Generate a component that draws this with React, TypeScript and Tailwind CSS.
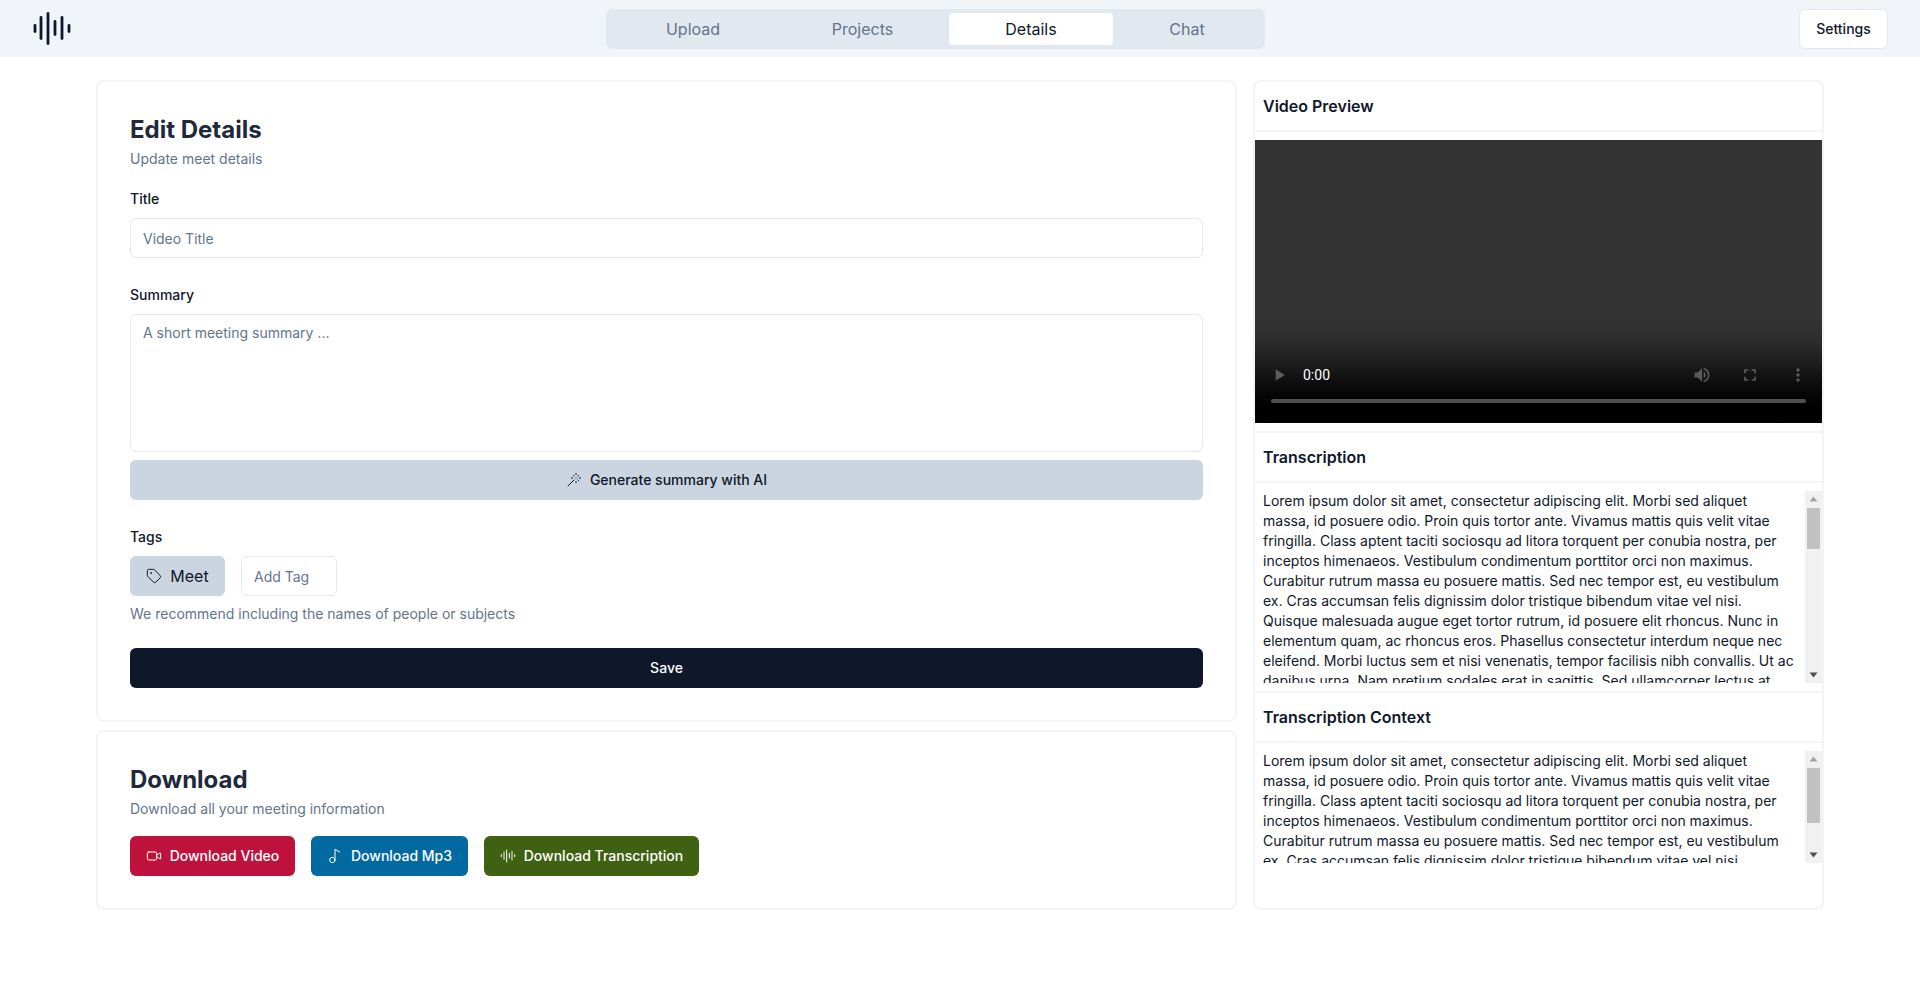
import { Tag, Video, Music2, AudioLines, Wand } from 'lucide-react';
import type { ReactNode } from 'react';

const lorem =
  'Lorem ipsum dolor sit amet, consectetur adipiscing elit. Morbi sed aliquet massa, id posuere odio. Proin quis tortor ante. Vivamus mattis quis velit vitae fringilla. Class aptent taciti sociosqu ad litora torquent per conubia nostra, per inceptos himenaeos. Vestibulum condimentum porttitor orci non maximus. Curabitur rutrum massa eu posuere mattis. Sed nec tempor est, eu vestibulum ex. Cras accumsan felis dignissim dolor tristique bibendum vitae vel nisi. Quisque malesuada augue eget tortor rutrum, id posuere elit rhoncus. Nunc in elementum quam, ac rhoncus eros. Phasellus consectetur interdum neque nec eleifend. Morbi luctus sem et nisi venenatis, tempor facilisis nibh convallis. Ut ac dapibus urna. Nam pretium sodales erat in sagittis. Sed ullamcorper lectus at lorem fermentum, nec pretium nunc pulvinar.';

const tabs = ['Upload', 'Projects', 'Details', 'Chat'];

function Logo() {
  const bars = [
    [3, 12, 21],
    [9, 4, 28],
    [16, 0, 33],
    [23, 8, 24],
    [30, 4, 28],
    [37, 12, 21],
  ];
  return (
    <svg width="40" height="33" viewBox="0 0 40 33" stroke="#0f172a" strokeWidth="2.8" strokeLinecap="round">
      {bars.map(([x, y1, y2]) => (
        <line key={x} x1={x} y1={y1 + 1.4} x2={x} y2={y2 - 1.4} />
      ))}
    </svg>
  );
}

function Arrow({ points, fill }: Readonly<{ points: string; fill: string }>) {
  return (
    <svg width="17" height="17" viewBox="0 0 17 17" className="shrink-0">
      <polygon points={points} fill={fill} />
    </svg>
  );
}

function Scrollbar({ thumb }: Readonly<{ thumb: string }>) {
  return (
    <div className="w-[17px] shrink-0 bg-[#f1f1f1] flex flex-col justify-between">
      <div className="flex flex-col items-center">
        <Arrow points="8.5,5.5 12.5,10.5 4.5,10.5" fill="#a3a3a3" />
        <div className={`${thumb} w-[13px] bg-[#c1c1c1]`} />
      </div>
      <Arrow points="8.5,11.5 12.5,6.5 4.5,6.5" fill="#505050" />
    </div>
  );
}

function TextPanel({ title, height, thumb }: Readonly<{ title: string; height: string; thumb: string }>) {
  return (
    <div className="mt-2 border-t-2 border-[#f3f4f6]">
      <h3 className="h-12 px-2 flex items-center font-semibold text-base text-[#0f172a] border-b-2 border-[#f3f4f6] box-content">
        {title}
      </h3>
      <div className={`${height} mt-2 flex`}>
        <div className="flex-1 pl-2 pr-[10px] overflow-hidden text-sm leading-5 text-[#0f172a]">{lorem}</div>
        <Scrollbar thumb={thumb} />
      </div>
    </div>
  );
}

function DownloadButton({ color, width, icon, label }: Readonly<{ color: string; width: string; icon: ReactNode; label: string }>) {
  return (
    <button className={`${color} ${width} h-10 rounded-md flex items-center justify-center gap-2 text-sm font-medium text-white`}>
      {icon}
      {label}
    </button>
  );
}

export default function App() {
  return (
    <div className="min-h-[1001px] bg-white font-['Inter',sans-serif] text-[#0f172a]">
      <header className="h-[57px] bg-[#f1f5f9] flex items-center justify-between pl-8 pr-8">
        <div className="w-10">
          <Logo />
        </div>
        <div className="w-[659px] h-10 bg-[#e2e8f0] rounded-md p-1 grid grid-cols-[166px_173px_164px_1fr] text-base text-[#64748b]">
          {tabs.map((tab) => (
            <div
              key={tab}
              className={
                tab === 'Details'
                  ? 'bg-white text-[#0f172a] rounded flex items-center justify-center'
                  : 'flex items-center justify-center'
              }
            >
              {tab}
            </div>
          ))}
        </div>
        <button className="h-10 w-[89px] bg-white border border-[#e2e8f0] rounded-md text-sm font-medium">Settings</button>
      </header>

      <main className="flex gap-4 pl-24 pr-24 pt-[23px]">
        <div className="w-[1141px] flex flex-col gap-2">
          <section className="h-[642px] border-2 border-[#f3f4f6] rounded-lg px-8 pt-8">
            <h2 className="text-2xl font-bold leading-8 text-[#1e293b]">Edit Details</h2>
            <p className="text-sm leading-5 text-[#64748b] mt-[3px]">Update meet details</p>

            <label className="block text-sm font-medium leading-5 mt-[20px]">Title</label>
            <input
              placeholder="Video Title"
              className="block w-full h-10 mt-[9px] border border-[#e2e8f0] rounded-md px-3 text-sm placeholder:text-[#64748b]"
            />

            <label className="block text-sm font-medium leading-5 mt-[27px]">Summary</label>
            <textarea
              placeholder="A short meeting summary ..."
              className="block w-full h-[138px] mt-[9px] border border-[#e2e8f0] rounded-md px-3 py-2 text-sm leading-5 resize-none placeholder:text-[#64748b]"
            />
            <button className="w-full h-10 mt-2 bg-[#cbd5e1] rounded-md flex items-center justify-center gap-2 text-sm font-medium">
              <Wand size={16} strokeWidth={1.5} />
              Generate summary with AI
            </button>

            <label className="block text-sm font-medium leading-5 mt-[27px]">Tags</label>
            <div className="flex items-center gap-4 mt-[9px]">
              <span className="h-10 w-[95px] bg-[#cbd5e1] rounded-md flex items-center justify-center gap-2 text-base">
                <Tag size={16} strokeWidth={1.5} />
                Meet
              </span>
              <input
                placeholder="Add Tag"
                className="block h-10 w-[96px] border border-[#e2e8f0] rounded-md px-3 text-sm placeholder:text-[#64748b]"
              />
            </div>
            <p className="text-sm leading-5 text-[#64748b] mt-2">We recommend including the names of people or subjects</p>
            <button className="w-full h-10 mt-6 bg-[#0f172a] text-white rounded-md text-sm font-medium">Save</button>
          </section>

          <section className="h-[180px] border-2 border-[#f3f4f6] rounded-lg px-8 pt-8">
            <h2 className="text-2xl font-bold leading-8 text-[#1e293b]">Download</h2>
            <p className="text-sm leading-5 text-[#64748b] mt-[3px]">Download all your meeting information</p>
            <div className="flex gap-4 mt-[17px]">
              <DownloadButton color="bg-[#be123c]" width="w-[165px]" icon={<Video size={16} strokeWidth={1.5} />} label="Download Video" />
              <DownloadButton color="bg-[#0369a1]" width="w-[157px]" icon={<Music2 size={16} strokeWidth={1.5} />} label="Download Mp3" />
              <DownloadButton color="bg-[#3f6212]" width="w-[215px]" icon={<AudioLines size={16} strokeWidth={1.5} />} label="Download Transcription" />
            </div>
          </section>
        </div>

        <aside className="w-[571px] h-[830px] border-2 border-[#f3f4f6] rounded-lg">
          <h3 className="h-12 px-2 flex items-center font-semibold text-base text-[#0f172a] border-b-2 border-[#f3f4f6] box-content">Video Preview</h3>
          <video controls className="w-full h-[283px] mt-2 bg-black block" />
          <TextPanel title="Transcription" height="h-[192px]" thumb="h-[41px]" />
          <TextPanel title="Transcription Context" height="h-[112px]" thumb="h-[55px]" />
        </aside>
      </main>
    </div>
  );
}
